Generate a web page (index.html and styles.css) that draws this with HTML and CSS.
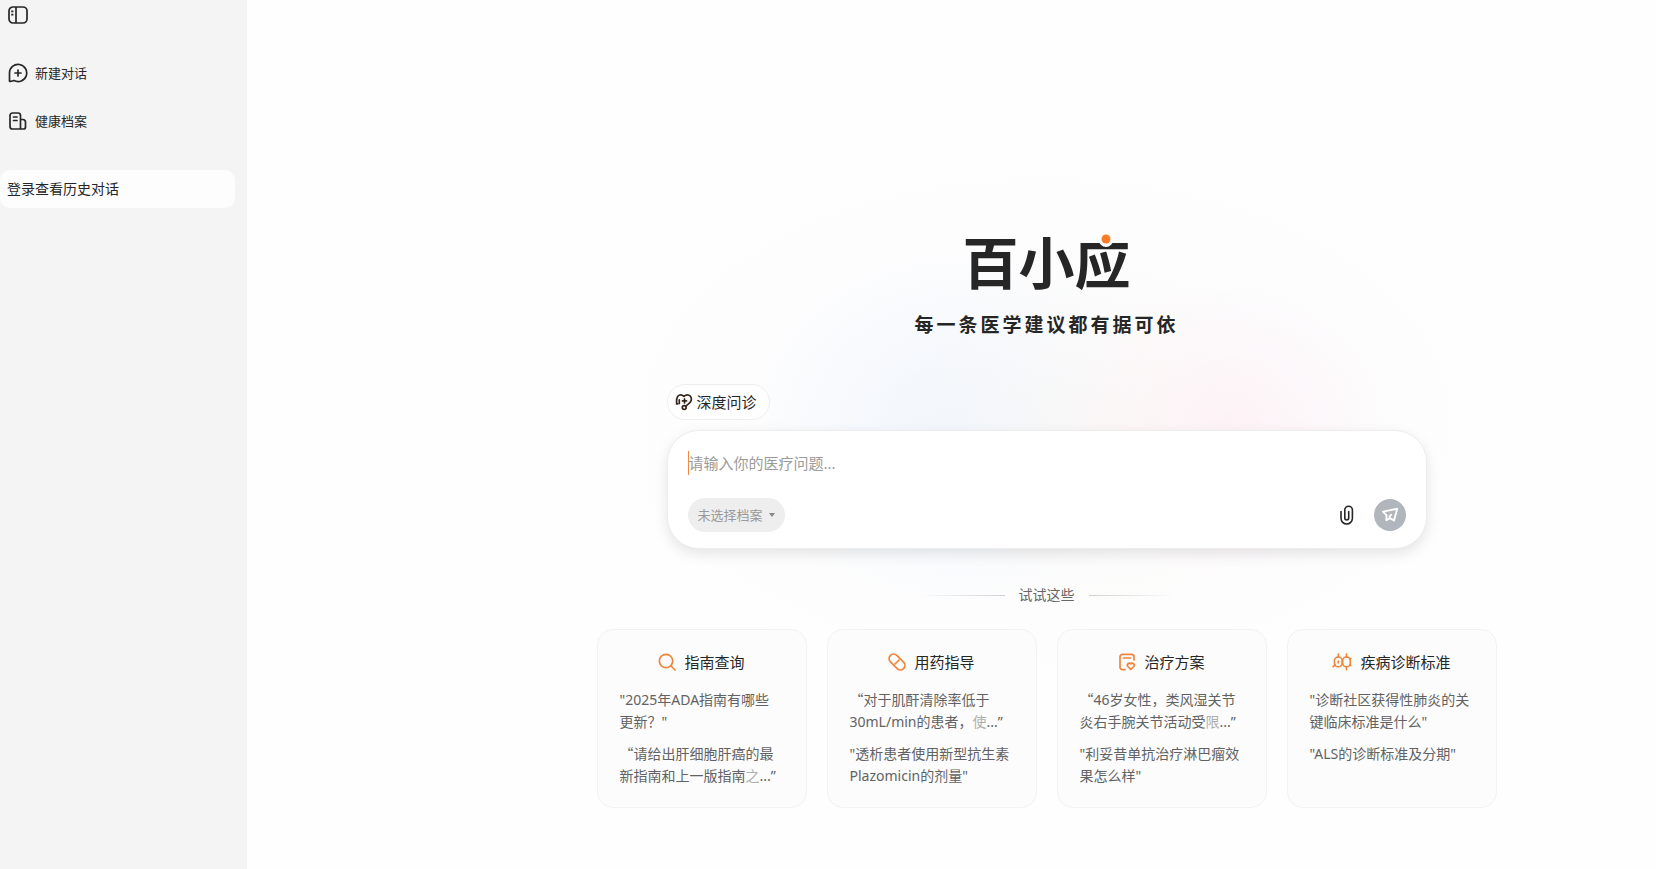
FILE: index.html
```html
<!DOCTYPE html>
<html lang="zh-CN">
<head>
<meta charset="utf-8">
<meta name="viewport" content="width=device-width, initial-scale=1">
<title>百小应</title>
<link rel="stylesheet" href="styles.css">
</head>
<body>
<div class="app">
  <aside class="sidebar">
    <button class="toggle" type="button" aria-label="收起侧栏">
      <svg width="20" height="18" viewBox="0 0 20 18" fill="none" stroke="currentColor" stroke-width="1.7"><rect x="1" y="1" width="18" height="16" rx="4"/><path d="M8 1v16M3.2 5.3h2.2M3.2 8.6h2.2"/></svg>
    </button>
    <nav class="menu">
      <a class="menu-item" href="#">
        <svg width="20" height="20" viewBox="0 0 20 20" fill="none" stroke="currentColor" stroke-width="1.7" stroke-linecap="round" stroke-linejoin="round"><path d="M1.5 18.300V10a8.600 8.600 0 1 1 4.600 7.600c-1.400.7-3 .8-4.600.7z"/><path d="M10 7v6M7 10h6"/></svg>
        <span>新建对话</span>
      </a>
      <a class="menu-item" href="#">
        <svg width="20" height="20" viewBox="0 0 20 20" fill="none" stroke="currentColor" stroke-width="1.7" stroke-linecap="round" stroke-linejoin="round"><path d="M12.500 18H4.500a2.500 2.500 0 0 1-2.500-2.500v-11A2.500 2.500 0 0 1 4.500 2h5.500A2.500 2.500 0 0 1 12.500 4.500zM12.500 8.500h2.300A2.700 2.700 0 0 1 17.500 11.200V16a2 2 0 0 1-2 2H12.500M5.500 6h3.500M5.500 9.500h3.500"/></svg>
        <span>健康档案</span>
      </a>
    </nav>
    <button class="login" type="button">登录查看历史对话</button>
  </aside>

  <main class="main">
    <div class="content">
      <div class="glow" aria-hidden="true"></div>
      <header class="hero">
        <h1 class="brand">百小<span class="brand-last">应<svg class="brand-dot" width="18" height="18" viewBox="0 0 18 18" aria-hidden="true"><circle cx="9" cy="9" r="7" fill="#fdfdfe"/><circle cx="9" cy="8" r="4.500" fill="#f97d28"/></svg></span></h1>
        <p class="slogan">每一条医学建议都有据可依</p>
      </header>

      <section class="ask">
        <button class="mode" type="button">
          <svg width="18" height="18" viewBox="0 0 18 18" fill="none" stroke="currentColor" stroke-width="1.700" stroke-linecap="round" stroke-linejoin="round"><path d="M2.800 10.800H1.600V8.300c0-3 .8-5.800 3.200-6.300 1.700-.3 2.900.2 4.200 1.300 1.300-1.100 2.600-1.600 4.200-1.300 2.600.5 3.700 3.100 3 5.500-.8 2.600-3.200 3.700-5.200 5.500"/><path d="M4.300 6.800v3.600M9.500 5.900v4M7.500 7.900h4"/><circle cx="9.200" cy="14.600" r="1.900"/></svg>
          <span>深度问诊</span>
        </button>
        <form class="box">
          <input class="question" type="text" placeholder="请输入你的医疗问题..." aria-label="医疗问题">
          <div class="tools">
            <button class="record" type="button">未选择档案<span class="caret"></span></button>
            <div class="actions">
              <button class="attach" type="button" aria-label="添加附件">
                <svg width="14" height="20" viewBox="0 0 14 20" fill="none" stroke="currentColor" stroke-width="1.600" stroke-linecap="round"><path d="M1 6.500v6.800a5.700 5.700 0 0 0 11.400 0V5a3.800 3.800 0 0 0-7.600 0v8a1.950 1.950 0 0 0 3.900 0V6.500"/></svg>
              </button>
              <button class="send" type="submit" aria-label="发送">
                <svg width="18" height="18" viewBox="0 0 18 18" fill="none" stroke="currentColor" stroke-width="1.900" stroke-linejoin="round" stroke-linecap="round"><path d="M16.300 2.800L2 5.600l3.400 3.600v5l3.400-2 4.200 2.300zM8.800 12.200l-.3-1.800 1.700-1.600"/></svg>
              </button>
            </div>
          </div>
        </form>
      </section>

      <div class="divider"><h2 class="divider-text">试试这些</h2></div>

      <section class="cards">
        <article class="card">
          <h3 class="card-title"><svg width="18" height="18" viewBox="0 0 18 18" fill="none" stroke="currentColor" stroke-width="1.700" stroke-linecap="round"><circle cx="8" cy="8" r="6.700"/><path d="M13 13l4 4"/></svg>指南查询</h3>
          <a class="prompt" href="#">"2025年ADA指南有哪些更新？"</a>
          <a class="prompt" href="#"><span class="wide">“</span>请给出肝细胞肝癌的最新指南和上一版指南<span class="fade">之</span>...”</a>
        </article>
        <article class="card">
          <h3 class="card-title"><svg width="18" height="18" viewBox="0 0 18 18" fill="none" stroke="currentColor" stroke-width="1.700" stroke-linecap="round"><rect x="-.3" y="4.500" width="18.600" height="9" rx="4.500" transform="rotate(45 9 9)"/><path d="M7 11l4-4"/></svg>用药指导</h3>
          <a class="prompt" href="#"><span class="wide">“</span>对于肌酐清除率低于30mL/min的患者，<span class="fade">使</span>...”</a>
          <a class="prompt" href="#">"透析患者使用新型抗生素Plazomicin的剂量"</a>
        </article>
        <article class="card">
          <h3 class="card-title"><svg width="18" height="18" viewBox="0 0 18 18" fill="none" stroke="currentColor" stroke-width="1.700" stroke-linecap="round" stroke-linejoin="round"><path d="M7 16.700H4.500A2.500 2.500 0 0 1 2 14.200V3.800A2.500 2.500 0 0 1 4.500 1.300h9a2.500 2.500 0 0 1 2.500 2.500V7M5.500 5h7"/><path d="M12.800 16.500L9.900 13.500a1.900 1.900 0 0 1 2.900-2.600 1.900 1.900 0 0 1 2.900 2.600z"/></svg>治疗方案</h3>
          <a class="prompt" href="#"><span class="wide">“</span>46岁女性，类风湿关节炎右手腕关节活动受<span class="fade">限</span>...”</a>
          <a class="prompt" href="#">"利妥昔单抗治疗淋巴瘤效果怎么样"</a>
        </article>
        <article class="card">
          <h3 class="card-title"><svg width="20" height="18" viewBox="0 0 20 18" fill="none" stroke="currentColor" stroke-width="1.600" stroke-linecap="round" stroke-linejoin="round"><rect x="2.500" y="4" width="7.600" height="9.800" rx="3.600"/><rect x="10.700" y="4" width="7.600" height="9.800" rx="3.600"/><path d="M6.300 4V1M14.500 4V1M14.500 13.800v3M3.200 11.800L1 13.800M6.300 8v2M18 11.800l.8.600M18 6l.8-.6"/></svg>疾病诊断标准</h3>
          <a class="prompt" href="#">"诊断社区获得性肺炎的关键临床标准是什么"</a>
          <a class="prompt" href="#">"ALS的诊断标准及分期"</a>
        </article>
      </section>
    </div>
  </main>
</div>
</body>
</html>
```
FILE: styles.css
```css
* {
  box-sizing: border-box;
}

body {
  margin: 0;
  background: #fefefe;
  color: #262626;
  font: 14px/22px "Noto Sans", "Noto Sans CJK SC", sans-serif;
}

button,
input {
  border: 0;
  padding: 0;
  background: none;
  color: inherit;
  font: inherit;
}

a {
  color: inherit;
  text-decoration: none;
}

h1,
h2,
h3,
p {
  margin: 0;
  font-weight: 400;
}

svg {
  display: block;
  flex: none;
}

.app {
  display: flex;
  min-height: 100vh;
}

.sidebar {
  flex: none;
  width: 247px;
  padding: 6px 12px 24px 0;
  background: #f4f4f5;
}

.toggle {
  display: block;
  margin-left: 8px;
}

.menu {
  display: flex;
  flex-direction: column;
  gap: 24px;
  margin-top: 37px;
  padding-left: 8px;
}

.menu-item {
  display: flex;
  align-items: center;
  gap: 7px;
  height: 24px;
  font-size: 13px;
}

.login {
  display: block;
  width: 100%;
  height: 38px;
  margin-top: 37px;
  padding: 0 7px;
  border-radius: 10px;
  background: #fdfdfd;
  text-align: left;
}

.main {
  flex: 1;
  min-width: 0;
  padding: 234px 0 60px 190px;
  overflow: hidden;
}

.content {
  position: relative;
  isolation: isolate;
  width: 100%;
  max-width: 900px;
  margin: 0 auto;
}

.glow {
  position: absolute;
  z-index: -1;
  inset: -60px 0 100px;
  background:
    radial-gradient(ellipse 170px 150px at 71% 48%, rgba(255, 234, 242, 0.5), transparent),
    radial-gradient(ellipse 190px 190px at 56% 49%, rgba(255, 247, 240, 0.4), transparent),
    radial-gradient(ellipse 210px 180px at 40% 48%, rgba(234, 243, 252, 0.6), transparent),
    radial-gradient(ellipse 450px 270px at 50% 46%, rgba(249, 249, 251, 0.8), transparent);
}

.hero {
  text-align: center;
}

.brand {
  font-size: 56px;
  font-weight: 700;
  line-height: 56px;
}

.brand-last {
  position: relative;
}

.brand-dot {
  position: absolute;
  top: 7px;
  left: 22px;
}

.slogan {
  margin-top: 21px;
  font-size: 19px;
  font-weight: 600;
  line-height: 28px;
  letter-spacing: 3px;
}

.ask {
  max-width: 760px;
  margin: 45px auto 0;
}

.mode {
  display: flex;
  align-items: center;
  gap: 4px;
  height: 36px;
  padding: 0 12px 0 7px;
  border: 1px solid #eeeeef;
  border-radius: 18px;
  background: #fefefe;
  font-size: 15px;
}

.mode svg {
  color: #35231b;
}

.box {
  margin-top: 10px;
  padding: 20px 20px 16px;
  border: 1px solid #ededee;
  border-radius: 32px;
  background: #fff;
  box-shadow: 0 5px 14px rgba(0, 0, 0, 0.1);
}

.question {
  display: block;
  width: 100%;
  height: 24px;
  border-left: 1px solid #f08a45;
  outline: 0;
  font-size: 15px;
}

.question::placeholder {
  color: #9b9b9b;
  opacity: 1;
}

.tools {
  display: flex;
  align-items: center;
  justify-content: space-between;
  margin-top: 23px;
}

.record {
  display: flex;
  align-items: center;
  gap: 6px;
  height: 34px;
  padding: 0 10px;
  border-radius: 17px;
  background: #eeeeee;
  color: #999;
  font-size: 13px;
}

.caret {
  border: 3px solid transparent;
  border-top: 4px solid #888;
  border-bottom: 0;
}

.actions {
  display: flex;
  align-items: center;
  gap: 20px;
}

.send {
  display: grid;
  place-items: center;
  width: 32px;
  height: 32px;
  border-radius: 50%;
  background: #b1b6bd;
  color: #fff;
}

.divider {
  display: flex;
  align-items: center;
  justify-content: center;
  gap: 14px;
  margin-top: 36px;
}

.divider::before,
.divider::after {
  width: 86px;
  height: 1px;
  background: linear-gradient(to left, #d0d0d0, transparent);
  content: "";
}

.divider::after {
  background: linear-gradient(to right, #d0d0d0, transparent);
}

.divider-text {
  color: #666;
  font-size: 14px;
  line-height: 20px;
}

.cards {
  display: grid;
  grid-template-columns: repeat(4, minmax(0, 1fr));
  gap: 20px;
  margin-top: 24px;
}

.card {
  padding: 21px 22px 20px;
  border: 1px solid #f2f2f3;
  border-radius: 16px;
  background: #fcfcfc;
}

.card-title {
  display: flex;
  align-items: center;
  justify-content: center;
  gap: 8px;
  margin-bottom: 16px;
  font-size: 15px;
  white-space: nowrap;
}

.card-title svg {
  color: #f0853a;
}

.prompt {
  display: block;
  padding-right: 2px;
  color: #626262;
}

.prompt + .prompt {
  margin-top: 10px;
}

.wide {
  font-family: "Noto Sans CJK SC", sans-serif;
  line-height: 1;
}

.fade {
  display: inline-block;
  opacity: 0.5;
}
```
